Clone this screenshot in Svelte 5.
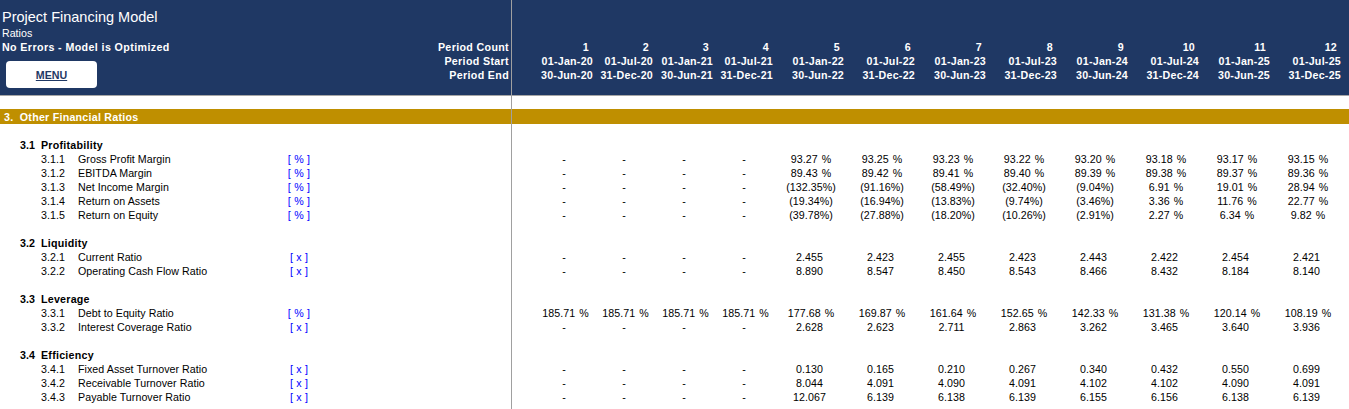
<script lang="ts">
  const periods = [
    ['1', '01-Jan-20', '30-Jun-20'],
    ['2', '01-Jul-20', '31-Dec-20'],
    ['3', '01-Jan-21', '30-Jun-21'],
    ['4', '01-Jul-21', '31-Dec-21'],
    ['5', '01-Jan-22', '30-Jun-22'],
    ['6', '01-Jul-22', '31-Dec-22'],
    ['7', '01-Jan-23', '30-Jun-23'],
    ['8', '01-Jul-23', '31-Dec-23'],
    ['9', '01-Jan-24', '30-Jun-24'],
    ['10', '01-Jul-24', '31-Dec-24'],
    ['11', '01-Jan-25', '30-Jun-25'],
    ['12', '01-Jul-25', '31-Dec-25']
  ]

  const dash = ['-', '-', '-', '-']

  const sections = [
    {
      no: '3.1',
      title: 'Profitability',
      rows: [
        ['3.1.1', 'Gross Profit Margin', '%', [...dash, '93.27 %', '93.25 %', '93.23 %', '93.22 %', '93.20 %', '93.18 %', '93.17 %', '93.15 %']],
        ['3.1.2', 'EBITDA Margin', '%', [...dash, '89.43 %', '89.42 %', '89.41 %', '89.40 %', '89.39 %', '89.38 %', '89.37 %', '89.36 %']],
        ['3.1.3', 'Net Income Margin', '%', [...dash, '(132.35%)', '(91.16%)', '(58.49%)', '(32.40%)', '(9.04%)', '6.91 %', '19.01 %', '28.94 %']],
        ['3.1.4', 'Return on Assets', '%', [...dash, '(19.34%)', '(16.94%)', '(13.83%)', '(9.74%)', '(3.46%)', '3.36 %', '11.76 %', '22.77 %']],
        ['3.1.5', 'Return on Equity', '%', [...dash, '(39.78%)', '(27.88%)', '(18.20%)', '(10.26%)', '(2.91%)', '2.27 %', '6.34 %', '9.82 %']]
      ]
    },
    {
      no: '3.2',
      title: 'Liquidity',
      rows: [
        ['3.2.1', 'Current Ratio', 'x', [...dash, '2.455', '2.423', '2.455', '2.423', '2.443', '2.422', '2.454', '2.421']],
        ['3.2.2', 'Operating Cash Flow Ratio', 'x', [...dash, '8.890', '8.547', '8.450', '8.543', '8.466', '8.432', '8.184', '8.140']]
      ]
    },
    {
      no: '3.3',
      title: 'Leverage',
      rows: [
        ['3.3.1', 'Debt to Equity Ratio', '%', ['185.71 %', '185.71 %', '185.71 %', '185.71 %', '177.68 %', '169.87 %', '161.64 %', '152.65 %', '142.33 %', '131.38 %', '120.14 %', '108.19 %']],
        ['3.3.2', 'Interest Coverage Ratio', 'x', [...dash, '2.628', '2.623', '2.711', '2.863', '3.262', '3.465', '3.640', '3.936']]
      ]
    },
    {
      no: '3.4',
      title: 'Efficiency',
      rows: [
        ['3.4.1', 'Fixed Asset Turnover Ratio', 'x', [...dash, '0.130', '0.165', '0.210', '0.267', '0.340', '0.432', '0.550', '0.699']],
        ['3.4.2', 'Receivable Turnover Ratio', 'x', [...dash, '8.044', '4.091', '4.090', '4.091', '4.102', '4.102', '4.090', '4.091']],
        ['3.4.3', 'Payable Turnover Ratio', 'x', [...dash, '12.067', '6.139', '6.138', '6.139', '6.155', '6.156', '6.138', '6.139']]
      ]
    }
  ]
</script>

<div class="sheet">
  <header class="head">
    <div class="title">Project Financing Model</div>
    <div class="sub">Ratios</div>
    <div class="status bold">No Errors - Model is Optimized</div>
    <button class="menu">MENU</button>

    <div class="period-label count bold">Period Count</div>
    <div class="period-label start bold">Period Start</div>
    <div class="period-label end bold">Period End</div>

    <div class="period-cols count">
      {#each periods as p}<span class="bold num">{p[0]}</span>{/each}
    </div>
    <div class="period-cols start">
      {#each periods as p}<span class="bold">{p[1]}</span>{/each}
    </div>
    <div class="period-cols end">
      {#each periods as p}<span class="bold">{p[2]}</span>{/each}
    </div>
  </header>

  <div class="band">3.&nbsp; Other Financial Ratios</div>

  <div class="body">
    {#each sections as s}
      <section class="group">
        <div class="line bold"><span class="sec-no">{s.no}</span><span class="sec-title">{s.title}</span></div>
        {#each s.rows as r}
          <div class="line row">
            <span class="row-no">{r[0]}</span>
            <span class="row-name">{r[1]}</span>
            <span class="unit">[ {r[2]} ]</span>
            <div class="vals">
              {#each r[3] as v}
                <span class:pct={String(v).includes('%')}>{v}</span>
              {/each}
            </div>
          </div>
        {/each}
      </section>
    {/each}
  </div>
</div>

<style>
  :global(body) {
    overflow: hidden;
    background: #fff;
  }

  .sheet {
    position: relative;
    height: 409px;
    overflow: hidden;
    font-family: 'Liberation Sans', Arial, sans-serif;
    font-size: 10.67px;
    line-height: 14px;
    color: #000;
  }

  /* frozen pane divider */
  .sheet::after {
    content: '';
    position: absolute;
    top: 0;
    bottom: 0;
    left: 511px;
    width: 1px;
    background: #a0a0a0;
  }

  .bold {
    font-weight: 700;
  }

  .head {
    display: grid;
    grid-template-columns: 509px 1fr;
    grid-template-rows: 18px 14px 14px 14px 14px 13px;
    height: 96px;
    padding-top: 8px;
    box-sizing: border-box;
    background: #1f3864;
    color: #fff;
    border-bottom: 1px solid #a6a6a6;
  }

  .head > * {
    min-width: 0;
  }

  .title {
    grid-column: 1;
    grid-row: 1;
    padding-left: 2px;
    font-size: 14.5px;
    line-height: 18px;
  }

  .sub {
    grid-column: 1;
    grid-row: 2;
    padding-left: 2px;
  }

  .status {
    grid-column: 1;
    grid-row: 3;
    padding-left: 2px;
    letter-spacing: 0.4px;
  }

  .menu {
    grid-column: 1;
    grid-row: 4 / 7;
    align-self: start;
    width: 91px;
    height: 27px;
    margin: 7px 0 0 6px;
    padding: 0;
    border: none;
    border-radius: 4px;
    background: #fff;
    color: #1f3864;
    font: 700 10.67px 'Liberation Sans', Arial, sans-serif;
    text-decoration: underline;
  }

  .period-label {
    grid-column: 1;
    text-align: right;
    letter-spacing: 0.35px;
  }

  .period-cols {
    grid-column: 2;
    display: grid;
    grid-template-columns: repeat(4, 60px) repeat(8, 71px);
    justify-content: end;
    padding-right: 8px;
    text-align: right;
    letter-spacing: 0.25px;
  }

  .count {
    grid-row: 3;
  }

  .start {
    grid-row: 4;
  }

  .end {
    grid-row: 5;
  }

  .num {
    padding-right: 4px;
  }

  .band {
    height: 15px;
    margin-top: 13px;
    padding-left: 4px;
    background: #bf8f00;
    color: #fff;
    font-weight: 700;
    line-height: 16px;
    letter-spacing: 0.25px;
  }

  .body {
    padding-top: 14px;
  }

  .group {
    padding-bottom: 14px;
  }

  .line {
    height: 14px;
    padding-left: 20px;
  }

  .sec-no {
    display: inline-block;
    width: 21px;
  }

  .sec-title {
    letter-spacing: 0.25px;
  }

  .row {
    display: grid;
    grid-template-columns: 37px 200px 42px 1fr;
    padding-left: 41px;
    letter-spacing: 0.05px;
  }

  .unit {
    color: #0000ff;
    text-align: center;
    letter-spacing: 0.2px;
  }

  .vals {
    display: grid;
    grid-template-columns: repeat(4, 60px) repeat(8, 71px);
    justify-content: end;
    padding-right: 7px;
    text-align: center;
  }

  .pct {
    padding-left: 3px;
    word-spacing: 1px;
  }
</style>
